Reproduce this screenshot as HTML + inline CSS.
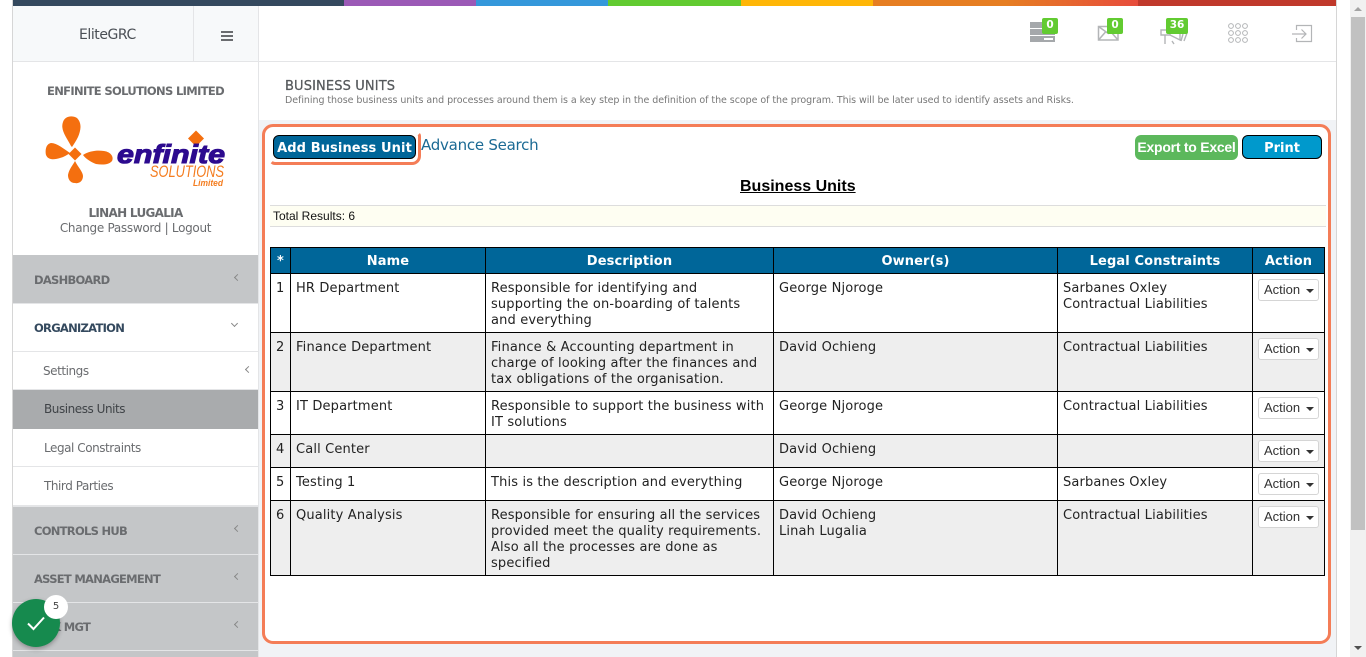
<!DOCTYPE html>
<html><head><meta charset="utf-8"><title>Business Units</title>
<style>
*{box-sizing:border-box}
html,body{margin:0;padding:0;width:1366px;height:657px;overflow:hidden;background:#fff;font-family:"Liberation Sans",sans-serif}
.a{position:absolute;white-space:nowrap}
.side{font-family:"DejaVu Sans",sans-serif}
.bar{position:absolute;top:0;height:6px}
.m{position:absolute;left:13px;width:245px;background:#c4c6c8;border-bottom:1px solid #e4e5e7}
.m b{position:absolute;left:21px;top:16px;font:bold 11.5px/16px "DejaVu Sans",sans-serif;color:#6a6c6f;white-space:nowrap;letter-spacing:-.72px}
.s{position:absolute;left:13px;width:245px;background:#fff;border-bottom:1px solid #e4e5e7}
.s span{position:absolute;left:31px;top:11px;font:12px/16px "DejaVu Sans",sans-serif;color:#6a6c6f;white-space:nowrap;letter-spacing:-.45px}
.ch{position:absolute;width:5px;height:5px;border-left:1px solid #888;border-bottom:1px solid #888;transform:rotate(45deg)}
.bd{position:absolute;top:18px;height:16px;background:#62cb31;border-radius:2px;color:#fff;font:bold 10.5px/15px "DejaVu Sans",sans-serif;text-align:center}
table{position:absolute;left:270px;top:247px;width:1054px;border-collapse:collapse;table-layout:fixed;font:13px/16px "DejaVu Sans",sans-serif;color:#222}
th{background:#006699;color:#fff;font:bold 13px/16px "DejaVu Sans",sans-serif;border:1px solid #000;height:26px;padding:2px 0 0;text-align:center;letter-spacing:.12px}
td{border:1px solid #000;vertical-align:top;padding:7px 5px 0 5px;letter-spacing:.15px;white-space:nowrap}
tr.g td{background:#eee}
.ac{display:block;width:61px;height:22px;margin-top:-2px;border:1px solid #d5d5d5;border-radius:3px;background:#fff;font:13px/20px "Liberation Sans",sans-serif;color:#333;padding-left:5px;white-space:nowrap;letter-spacing:0;position:relative}
.ac i{position:absolute;left:47px;top:9px;border-left:4px solid transparent;border-right:4px solid transparent;border-top:4px solid #333}
</style></head><body>

<div class="bar" style="left:13px;width:331px;background:#34495e"></div>
<div class="bar" style="left:344px;width:132px;background:#9b59b6"></div>
<div class="bar" style="left:476px;width:132px;background:#3498db"></div>
<div class="bar" style="left:608px;width:133px;background:#62cb31"></div>
<div class="bar" style="left:741px;width:132px;background:#ffb606"></div>
<div class="bar" style="left:873px;width:265px;background:linear-gradient(90deg,#e67e22 0,#e67e22 50%,#e74c3c 100%)"></div>
<div class="bar" style="left:1138px;width:198px;background:#c0392b"></div>

<div class="a" style="left:12px;top:0;width:1px;height:657px;background:#d6d6d6"></div>
<div class="a" style="left:1336px;top:0;width:1px;height:657px;background:#d6d6d6"></div>

<!-- scrollbar -->
<div class="a" style="left:1350px;top:0;width:16px;height:657px;background:#f1f1f1"></div>
<div class="a" style="left:1351px;top:17px;width:14px;height:513px;background:#c1c1c1"></div>
<div class="a" style="left:1354px;top:7px;border-left:4px solid transparent;border-right:4px solid transparent;border-bottom:4px solid #a3a3a3"></div>
<div class="a" style="left:1354px;top:646px;border-left:4px solid transparent;border-right:4px solid transparent;border-top:4px solid #505050"></div>

<!-- brand header -->
<div class="a" style="left:13px;top:6px;width:245px;height:56px;background:#f7f9fa;border-bottom:1px solid #e4e5e7"></div>
<div class="a" style="left:193px;top:6px;width:1px;height:55px;background:#e4e5e7"></div>
<div class="a" style="left:258px;top:6px;width:1px;height:651px;background:#e4e5e7"></div>
<div class="a side" style="left:79px;top:26px;font-size:14px;line-height:18px;color:#4a4f55;letter-spacing:-.45px">EliteGRC</div>
<div class="a" style="left:221px;top:31px;width:12px;height:2px;background:#6a6c6f"></div>
<div class="a" style="left:221px;top:35px;width:12px;height:2px;background:#6a6c6f"></div>
<div class="a" style="left:221px;top:39px;width:12px;height:2px;background:#6a6c6f"></div>

<!-- top icons -->
<div class="a" style="left:259px;top:61px;width:1077px;height:1px;background:#e4e5e7"></div>
<svg class="a" style="left:1020px;top:10px" width="300" height="45" viewBox="0 0 300 45">
 <g fill="#a5a8ab"><rect x="10" y="12" width="25" height="6"/><rect x="10" y="19" width="25" height="6"/><rect x="10" y="26" width="25" height="6"/></g>
 <rect x="24" y="28" width="9" height="2" fill="#fff"/>
 <g fill="none" stroke="#b3b5b7" stroke-width="1.200">
  <path d="M78.500 16.500H98V30H78.500ZM78.500 16.500l9.750 7 9.750-7M78.500 30l7-8M98 30l-7-8" stroke-width="1.500"/>
  <path d="M141 20h9v5h-9zM145 25v9M150 20l10-3v13l-10-5M152 31l2 3M163 24l-2 7M167 23l-3 8" stroke-width="1.400"/>
  <g stroke-width="1"><circle cx="211" cy="16" r="2.400"/><circle cx="218" cy="16" r="2.400"/><circle cx="225" cy="16" r="2.400"/><circle cx="211" cy="23" r="2.400"/><circle cx="218" cy="23" r="2.400"/><circle cx="225" cy="23" r="2.400"/><circle cx="211" cy="30" r="2.400"/><circle cx="218" cy="30" r="2.400"/><circle cx="225" cy="30" r="2.400"/></g>
  <path d="M276.500 20V15.500H291.500V31.500H276.500V28M272 24H286M281.500 19.500L286 24l-4.500 4.500"/>
 </g>
</svg>
<div class="bd" style="left:1042px;width:16px">0</div>
<div class="bd" style="left:1107px;width:16px">0</div>
<div class="bd" style="left:1166px;width:22px">36</div>

<!-- profile -->
<div class="a side" style="left:13px;width:245px;top:83px;text-align:center;font-size:11.5px;line-height:16px;font-weight:bold;color:#6a6c6f;letter-spacing:-.65px">ENFINITE SOLUTIONS LIMITED</div>
<svg class="a" style="left:40px;top:110px" width="195" height="84" viewBox="0 0 195 84">
 <g fill="#f46f0f">
  <path d="M31 36C27 28 20 20 23 12C25 6 32 5 37 8C42 13 41 20 38 27C36 31 34 34 32 37Z"/>
  <path d="M30 43C24 39 17 33 11 33C6 34 5 40 6 45C8 50 14 50 20 48C24 47 27 45 30 43Z"/>
  <path d="M43 45C49 41 57 40 64 41C71 42 74 47 72 51C69 55 62 55 56 54C51 52 46 49 43 45Z"/>
  <path d="M35 51C38 57 43 62 43 66C43 71 39 74 35 73C30 73 28 69 28 65C29 59 33 55 35 51Z"/>
  <path d="M35 37.500L41.500 44 35 50.500 28.500 44Z"/>
  <path d="M156 20.500L164 28.500 156 36.500 148 28.500Z"/>
 </g>
 <text x="77" y="53" font-family="Liberation Sans,sans-serif" font-weight="bold" font-style="italic" font-size="26" fill="#2c0a8f" stroke="#2c0a8f" stroke-width="1.100" textLength="108" lengthAdjust="spacingAndGlyphs">enfinite</text>
 <text x="110" y="67" font-family="Liberation Sans,sans-serif" font-style="italic" font-size="17" fill="#f47d20" textLength="74" lengthAdjust="spacingAndGlyphs">SOLUTIONS</text>
 <text x="153" y="76" font-family="Liberation Sans,sans-serif" font-weight="bold" font-style="italic" font-size="9.500" fill="#f47d20" textLength="30" lengthAdjust="spacingAndGlyphs">Limited</text>
</svg>
<div class="a side" style="left:13px;width:245px;top:205px;text-align:center;font-size:12px;line-height:16px;font-weight:bold;color:#6a6c6f;letter-spacing:-.7px">LINAH LUGALIA</div>
<div class="a side" style="left:13px;width:245px;top:220px;text-align:center;font-size:12px;line-height:16px;color:#6a6c6f;letter-spacing:-.3px">Change Password | Logout</div>

<!-- menu -->
<div class="a" style="left:13px;top:255px;width:245px;height:402px;background:#e4e5e7"></div>
<div class="m" style="top:255px;height:49px"><b style="top:17px">DASHBOARD</b><i class="ch" style="left:222px;top:20px"></i></div>
<div class="m" style="top:304px;height:48px;background:#fff"><b style="color:#34495e">ORGANIZATION</b><i class="ch" style="left:219px;top:17px;transform:rotate(-45deg)"></i></div>
<div class="s" style="top:352px;height:38px"><span style="left:30px">Settings</span><i class="ch" style="left:233px;top:15px"></i></div>
<div class="s" style="top:390px;height:39px;background:#a9abad;border-color:#a9abad"><span style="color:#3f4347">Business Units</span></div>
<div class="s" style="top:429px;height:38px"><span>Legal Constraints</span></div>
<div class="s" style="top:467px;height:38px;border:0"><span>Third Parties</span></div>
<div class="m" style="top:507px;height:48px"><b>CONTROLS HUB</b><i class="ch" style="left:222px;top:19px"></i></div>
<div class="m" style="top:555px;height:48px"><b>ASSET MANAGEMENT</b><i class="ch" style="left:222px;top:19px"></i></div>
<div class="m" style="top:603px;height:48px"><b style="left:20px">RISK MGT</b><i class="ch" style="left:222px;top:19px"></i></div>
<div class="m" style="top:651px;height:6px;border:0"></div>

<!-- content -->
<div class="a" style="left:259px;top:120px;width:1077px;height:537px;background:#f1f3f6"></div>
<div class="a side" style="left:285px;top:79px;font-size:13px;line-height:16px;color:#55585b;letter-spacing:.13px;-webkit-text-stroke:.25px #55585b">BUSINESS UNITS</div>
<div class="a side" style="left:285px;top:95px;font-size:9.500px;line-height:12px;color:#777;letter-spacing:-.055px">Defining those business units and processes around them is a key step in the definition of the scope of the program. This will be later used to identify assets and Risks.</div>

<div class="a" style="left:262px;top:124px;width:1069px;height:520px;background:#fff;border:3px solid #f47d57;border-radius:11px"></div>

<div class="a" style="left:269px;top:132px;width:152px;height:33px;border:3px solid #f47d57;border-left-color:transparent;border-top-color:transparent;border-radius:0 4px 9px 6px"></div>
<div class="a" style="left:273px;top:135px;width:143px;height:24px;background:#006699;border:1px solid #000;border-radius:6px;color:#fff;font:bold 13px/25px 'DejaVu Sans',sans-serif;text-align:center;letter-spacing:.1px;overflow:hidden">Add Business Unit</div>
<div class="a side" style="left:421px;top:136px;font-size:15px;line-height:18px;color:#1b6a94;letter-spacing:-.25px">Advance Search</div>

<div class="a" style="left:1135px;top:135px;width:103px;height:25px;background:#5cb85c;border-radius:6px;color:#fff;font:bold 14px/25px 'Liberation Sans',sans-serif;text-align:center;letter-spacing:-.25px">Export to Excel</div>
<div class="a" style="left:1242px;top:135px;width:80px;height:24px;background:#0099cc;border:1px solid #000;border-radius:6px;color:#fff;font:bold 13px/25px 'DejaVu Sans',sans-serif;text-align:center;overflow:hidden">Print</div>

<div class="a" style="left:740px;top:177px;font:bold 16px/19px 'Liberation Sans',sans-serif;color:#000;text-decoration:underline">Business Units</div>

<div class="a" style="left:270px;top:205px;width:1056px;height:22px;background:#fefef2;border-top:1px solid #ddd;border-bottom:1px solid #ddd;font:12px/20px 'Liberation Sans',sans-serif;color:#111;padding-left:3px">Total Results: 6</div>

<table>
<colgroup><col style="width:20px"><col style="width:195px"><col style="width:288px"><col style="width:284px"><col style="width:195px"><col style="width:72px"></colgroup>
<tr style="height:26px"><th>*</th><th>Name</th><th>Description</th><th>Owner(s)</th><th>Legal Constraints</th><th>Action</th></tr>
<tr style="height:59px"><td>1</td><td>HR Department</td><td>Responsible for identifying and<br>supporting the on-boarding of talents<br>and everything</td><td>George Njoroge</td><td>Sarbanes Oxley<br>Contractual Liabilities</td><td><span class="ac">Action<i></i></span></td></tr>
<tr class="g" style="height:59px"><td>2</td><td>Finance Department</td><td>Finance &amp; Accounting department in<br>charge of looking after the finances and<br>tax obligations of the organisation.</td><td>David Ochieng</td><td>Contractual Liabilities</td><td><span class="ac">Action<i></i></span></td></tr>
<tr style="height:43px"><td>3</td><td>IT Department</td><td>Responsible to support the business with<br>IT solutions</td><td>George Njoroge</td><td>Contractual Liabilities</td><td><span class="ac">Action<i></i></span></td></tr>
<tr class="g" style="height:33px"><td>4</td><td>Call Center</td><td></td><td>David Ochieng</td><td></td><td><span class="ac">Action<i></i></span></td></tr>
<tr style="height:33px"><td>5</td><td>Testing 1</td><td>This is the description and everything</td><td>George Njoroge</td><td>Sarbanes Oxley</td><td><span class="ac">Action<i></i></span></td></tr>
<tr class="g" style="height:75px"><td>6</td><td>Quality Analysis</td><td>Responsible for ensuring all the services<br>provided meet the quality requirements.<br>Also all the processes are done as<br>specified</td><td>David Ochieng<br>Linah Lugalia</td><td>Contractual Liabilities</td><td><span class="ac">Action<i></i></span></td></tr>
</table>

<!-- floating badge -->
<div class="a" style="left:12px;top:599px;width:48px;height:48px;border-radius:50%;background:#168a4e;box-shadow:0 2px 5px rgba(0,0,0,.3)"></div>
<svg class="a" style="left:26px;top:614px" width="20" height="18" viewBox="0 0 20 18"><path d="M2 9.500L7.500 15 18 3.500" fill="none" stroke="#fff" stroke-width="2"/></svg>
<div class="a" style="left:44px;top:595px;width:24px;height:24px;border-radius:50%;background:#fff;text-align:center;font:10px/24px 'DejaVu Sans',sans-serif;color:#444">5</div>
</body></html>
